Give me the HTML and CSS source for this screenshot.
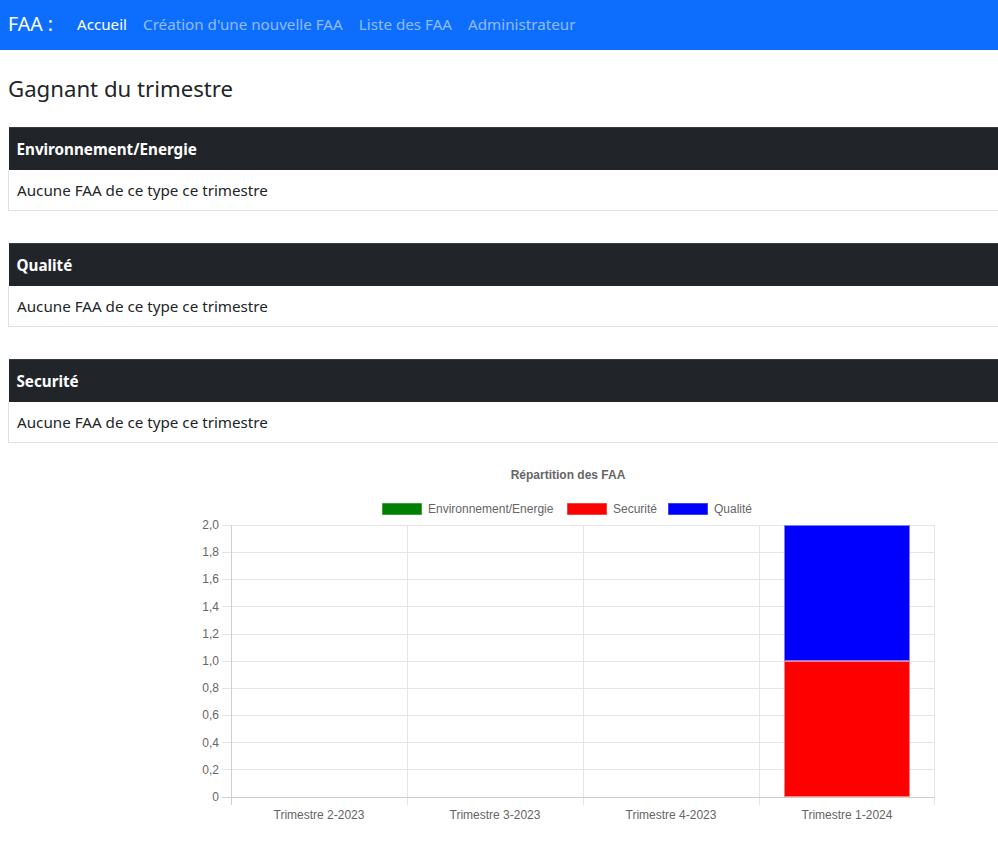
FILE: index.html
```html
<!DOCTYPE html>
<html lang="fr">
<head>
<meta charset="utf-8">
<title>FAA</title>
<link rel="stylesheet" href="styles.css">
</head>
<body>
<nav class="navbar">
  <span class="brand">FAA :</span>
  <a class="nav-link active" href="#">Accueil</a>
  <a class="nav-link" href="#">Création d'une nouvelle FAA</a>
  <a class="nav-link" href="#">Liste des FAA</a>
  <a class="nav-link" href="#">Administrateur</a>
</nav>
<main class="content">
  <h4 class="title">Gagnant du trimestre</h4>
  <table class="faa-table">
    <thead><tr><th>Environnement/Energie</th></tr></thead>
    <tbody><tr><td>Aucune FAA de ce type ce trimestre</td></tr></tbody>
  </table>
  <table class="faa-table">
    <thead><tr><th>Qualité</th></tr></thead>
    <tbody><tr><td>Aucune FAA de ce type ce trimestre</td></tr></tbody>
  </table>
  <table class="faa-table">
    <thead><tr><th>Securité</th></tr></thead>
    <tbody><tr><td>Aucune FAA de ce type ce trimestre</td></tr></tbody>
  </table>
</main>
<svg class="chart" width="998" height="390" viewBox="0 450 998 390" xmlns="http://www.w3.org/2000/svg">
  <text x="568" y="479" class="c-title" text-anchor="middle">Répartition des FAA</text>
  <!-- legend -->
  <rect x="382.5" y="503.5" width="39" height="11" fill="#008000" stroke="rgba(0,128,0,0.5)"/>
  <text x="428" y="513" class="c-lbl">Environnement/Energie</text>
  <rect x="567.5" y="503.5" width="39" height="11" fill="#ff0000" stroke="rgba(255,0,0,0.5)"/>
  <text x="613" y="513" class="c-lbl">Securité</text>
  <rect x="668.5" y="503.5" width="39" height="11" fill="#0000ff" stroke="rgba(0,0,255,0.5)"/>
  <text x="714" y="513" class="c-lbl">Qualité</text>
  <!-- horizontal grid -->
  <g stroke="#e5e5e5" stroke-width="1">
    <line x1="222" y1="525.5" x2="935" y2="525.5"/>
    <line x1="222" y1="552.5" x2="935" y2="552.5"/>
    <line x1="222" y1="579.5" x2="935" y2="579.5"/>
    <line x1="222" y1="606.5" x2="935" y2="606.5"/>
    <line x1="222" y1="634.5" x2="935" y2="634.5"/>
    <line x1="222" y1="661.5" x2="935" y2="661.5"/>
    <line x1="222" y1="688.5" x2="935" y2="688.5"/>
    <line x1="222" y1="715.5" x2="935" y2="715.5"/>
    <line x1="222" y1="742.5" x2="935" y2="742.5"/>
    <line x1="222" y1="769.5" x2="935" y2="769.5"/>
  </g>
  <g stroke="#e5e5e5" stroke-width="1">
    <line x1="407.5" y1="525" x2="407.5" y2="805"/>
    <line x1="583.5" y1="525" x2="583.5" y2="805"/>
    <line x1="759.5" y1="525" x2="759.5" y2="805"/>
    <line x1="934.5" y1="525" x2="934.5" y2="805"/>
  </g>
  <g stroke="#cfcfcf" stroke-width="1">
    <line x1="231.5" y1="525" x2="231.5" y2="805"/>
    <line x1="222" y1="797.5" x2="935" y2="797.5"/>
  </g>
  <!-- bars -->
  <rect x="784" y="661" width="126" height="136" fill="#ff0000"/>
  <rect x="784" y="525" width="126" height="136" fill="#0000ff"/>
  <rect x="784.5" y="661.5" width="125" height="135" fill="none" stroke="rgba(255,140,140,0.9)"/>
  <rect x="784.5" y="525.5" width="125" height="135" fill="none" stroke="rgba(140,140,255,0.9)"/>
  <!-- y labels -->
  <g class="c-lbl" text-anchor="end">
    <text x="219" y="529">2,0</text>
    <text x="219" y="556">1,8</text>
    <text x="219" y="583">1,6</text>
    <text x="219" y="611">1,4</text>
    <text x="219" y="638">1,2</text>
    <text x="219" y="665">1,0</text>
    <text x="219" y="692">0,8</text>
    <text x="219" y="719">0,6</text>
    <text x="219" y="747">0,4</text>
    <text x="219" y="774">0,2</text>
    <text x="219" y="801">0</text>
  </g>
  <g class="c-lbl" text-anchor="middle">
    <text x="319" y="819">Trimestre 2-2023</text>
    <text x="495" y="819">Trimestre 3-2023</text>
    <text x="671" y="819">Trimestre 4-2023</text>
    <text x="847" y="819">Trimestre 1-2024</text>
  </g>
</svg>
</body>
</html>
```
FILE: styles.css
```css
html { overflow-x: hidden; }
body {
  margin: 0;
  font-family: "Noto Sans", "Open Sans", sans-serif;
  font-size: 15.2px;
  line-height: 24px;
  color: #212529;
  background: #fff;
}
.navbar {
  display: flex;
  align-items: center;
  box-sizing: border-box;
  height: 50px;
  padding: 0 8px 3px;
  background: #0d6efd;
}
.brand {
  color: #fff;
  font-size: 19.5px;
  margin-right: 16px;
}
.nav-link {
  color: rgba(255,255,255,0.55);
  text-decoration: none;
  padding: 0 8px;
}
.nav-link.active { color: #fff; }
.content {
  padding: 0 0 0 8px;
}
.title {
  margin: 24px 0 24px;
  font-size: 22.2px;
  font-weight: 400;
  line-height: 29px;
}
.faa-table {
  width: 1010px;
  border-collapse: collapse;
  margin-bottom: 32px;
}
.faa-table th {
  background: #212529;
  color: #fff;
  text-align: left;
  font-weight: 700;
  padding: 9px 8px 9px 8px;
  border-top: 1px solid #373b3e;
  line-height: 24px;
}
.faa-table td {
  padding: 8px 8px 8px 8px;
  border-left: 1px solid #dee2e6;
  border-bottom: 1px solid #dee2e6;
}
.chart {
  display: block;
  margin-top: -25px;
}
.c-title { font: bold 12px "Liberation Sans", Arial, sans-serif; fill: #666; }
.c-lbl { font: 12px "Liberation Sans", Arial, sans-serif; fill: #666; }
```
